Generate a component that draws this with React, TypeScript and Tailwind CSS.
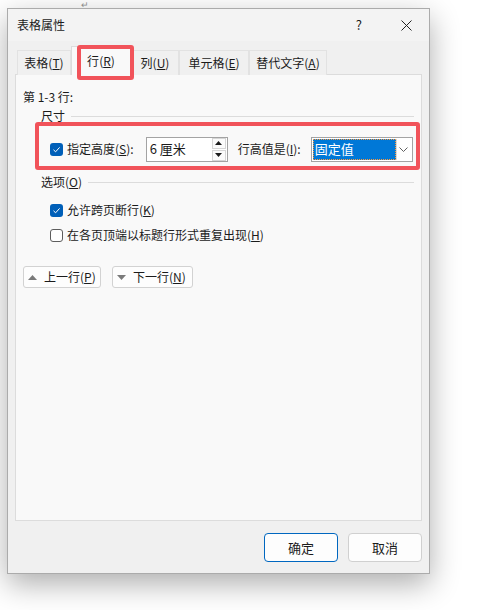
import React from "react";

const font = { fontFamily: '"Noto Sans CJK SC", "Noto Sans", sans-serif' };

function Key({ k }: { k: string }) {
  return (
    <>
      (<u className="underline-offset-1">{k}</u>)
    </>
  );
}

function Check({ on }: { on: boolean }) {
  if (on)
    return (
      <span className="flex h-[13px] w-[13px] shrink-0 items-center justify-center rounded-[3px] bg-[#005fb8]">
        <svg width="9" height="9" viewBox="0 0 9 9">
          <path d="M1.5 4.8 L3.6 6.8 L7.6 2.4" fill="none" stroke="#fff" strokeWidth="1" />
        </svg>
      </span>
    );
  return <span className="h-[13px] w-[13px] shrink-0 rounded-[3px] border border-[#5d5d5d] bg-white" />;
}

function GroupLabel({ children }: { children: React.ReactNode }) {
  return (
    <div className="ml-[18px] mr-[7px] flex h-[14px] items-center gap-[6px]">
      <span className="leading-[14px]">{children}</span>
      <div className="h-px flex-1 bg-[#dcdcdc]" />
    </div>
  );
}

type Tab = { label: string; k: string; w: string; active?: boolean };

const tabs: Tab[] = [
  { label: "表格", k: "T", w: "w-[54px]" },
  { label: "行", k: "R", w: "w-[60px]", active: true },
  { label: "列", k: "U", w: "w-[48px]" },
  { label: "单元格", k: "E", w: "w-[70px]" },
  { label: "替代文字", k: "A", w: "w-[78px]" },
];

export default function App() {
  return (
    <div className="relative h-[610px] w-[490px] overflow-hidden bg-white pl-[7px] pt-[8px] text-[12px] text-[#1b1b1b]" style={font}>
      <span className="absolute left-[81px] top-0 text-[9px] leading-[10px] text-[#8a8a8a]">↵</span>

      <div className="flex h-[566px] w-[423px] flex-col border border-[#ababab] bg-[#f0f0f0] shadow-[0_10px_28px_rgba(0,0,0,0.32)]">
        {/* title bar */}
        <div className="flex h-[32px] items-center bg-[#f3f3f3] pl-[9px]">
          <span className="flex-1 leading-[16px]">表格属性</span>
          <span className="mr-[39px] text-[13px]">?</span>
          <svg className="mr-[17px]" width="11" height="11" viewBox="0 0 11 11">
            <path d="M0.5 0.5 L10.5 10.5 M10.5 0.5 L0.5 10.5" stroke="#222" strokeWidth="1" />
          </svg>
        </div>

        {/* tabs */}
        <div className="relative z-10 mb-[-1px] ml-[9px] mt-[6px] flex h-[28px] items-end">
          {tabs.map((t) =>
            t.active ? (
              <div
                key={t.k}
                className={`relative flex h-[29px] ${t.w} items-center justify-center border border-b-0 border-[#dcdcdc] bg-[#f9f9f9] leading-[16px]`}
              >
                {t.label}
                <Key k={t.k} />
                <div className="absolute left-[5px] top-[-2px] h-[35px] w-[57px] rounded-[3px] border-[4px] border-[#f1535a]" />
              </div>
            ) : (
              <div
                key={t.k}
                className={`flex h-[25px] ${t.w} items-center justify-center border border-b-0 border-[#e2e2e2] bg-[#f0f0f0] leading-[16px]`}
              >
                {t.label}
                <Key k={t.k} />
              </div>
            )
          )}
        </div>

        {/* panel */}
        <div className="mx-[7px] flex-1 border border-[#dcdcdc] bg-[#f9f9f9] pl-[7px] pt-[14px]">
          <div className="h-[16px] leading-[16px]">第 1-3 行:</div>

          <div className="mt-[4px]">
            <GroupLabel>尺寸</GroupLabel>
          </div>

          <div className="ml-[12px] mr-px mt-[-1px] flex h-[48px] items-center rounded-[3px] border-[4px] border-[#f1535a] pl-[11px] pt-[6px]">
            <Check on />
            <span className="ml-[4px] leading-[16px]">
              指定高度<Key k="S" />:
            </span>
            <div className="ml-[12px] flex h-[25px] w-[82px] items-center border border-[#a3a3a3] bg-white">
              <span className="flex-1 pl-[3px] text-[13px] leading-[16px]">6 厘米</span>
              <div className="mr-px flex h-[23px] w-[14px] flex-col gap-px">
                <div className="flex flex-1 items-center justify-center border border-[#d6d6d6] bg-[#fbfbfb]">
                  <svg width="7" height="4" viewBox="0 0 7 4">
                    <path d="M0 4 L3.5 0 L7 4 Z" fill="#1b1b1b" />
                  </svg>
                </div>
                <div className="flex flex-1 items-center justify-center border border-[#d6d6d6] bg-[#fbfbfb]">
                  <svg width="7" height="4" viewBox="0 0 7 4">
                    <path d="M0 0 L3.5 4 L7 0 Z" fill="#1b1b1b" />
                  </svg>
                </div>
              </div>
            </div>
            <span className="ml-[10px] leading-[16px]">
              行高值是<Key k="I" />:
            </span>
            <div className="ml-[10px] flex h-[25px] w-[102px] items-stretch border border-[#a3a3a3] bg-white p-px">
              <div className="flex flex-1 items-center border border-dotted border-[#ff9a3a] bg-[#0078d7] pl-[1px] text-[13px] leading-[16px] text-white">
                固定值
              </div>
              <div className="flex w-[15px] items-center justify-center border-l border-[#dcdcdc] bg-white">
                <svg width="9" height="5" viewBox="0 0 9 5">
                  <path d="M0.5 0.5 L4.5 4.5 L8.5 0.5" fill="none" stroke="#606060" strokeWidth="1" />
                </svg>
              </div>
            </div>
          </div>

          <div className="mt-[5px]">
            <GroupLabel>
              选项<Key k="O" />
            </GroupLabel>
          </div>

          <div className="ml-[27px] mt-[13px] flex h-[16px] items-center gap-[4px]">
            <Check on />
            <span className="leading-[16px]">
              允许跨页断行<Key k="K" />
            </span>
          </div>
          <div className="ml-[27px] mt-[9px] flex h-[16px] items-center gap-[4px]">
            <Check on={false} />
            <span className="leading-[16px]">
              在各页顶端以标题行形式重复出现<Key k="H" />
            </span>
          </div>

          <div className="mt-[23px] flex gap-[11px]">
            <button className="flex h-[22px] w-[78px] items-center rounded-[3px] border border-[#d2d2d2] bg-[#fdfdfd] pl-[4px]">
              <svg width="9" height="5" viewBox="0 0 9 5">
                <path d="M0 5 L4.5 0 L9 5 Z" fill="#7a7a7a" />
              </svg>
              <span className="ml-[7px] leading-[16px]">
                上一行<Key k="P" />
              </span>
            </button>
            <button className="flex h-[22px] w-[81px] items-center rounded-[3px] border border-[#d2d2d2] bg-[#fdfdfd] pl-[4px]">
              <svg width="9" height="5" viewBox="0 0 9 5">
                <path d="M0 0 L4.5 5 L9 0 Z" fill="#7a7a7a" />
              </svg>
              <span className="ml-[7px] leading-[16px]">
                下一行<Key k="N" />
              </span>
            </button>
          </div>
        </div>

        {/* footer */}
        <div className="flex h-[52px] justify-end gap-[10px] pr-[7px] pt-[12px]">
          <button className="flex h-[29px] w-[74px] items-center justify-center rounded-[4px] border border-[#0067c0] bg-[#fdfdfd] text-[13px]">
            确定
          </button>
          <button className="flex h-[29px] w-[74px] items-center justify-center rounded-[4px] border border-[#d0d0d0] bg-[#fdfdfd] text-[13px]">
            取消
          </button>
        </div>
      </div>
    </div>
  );
}
